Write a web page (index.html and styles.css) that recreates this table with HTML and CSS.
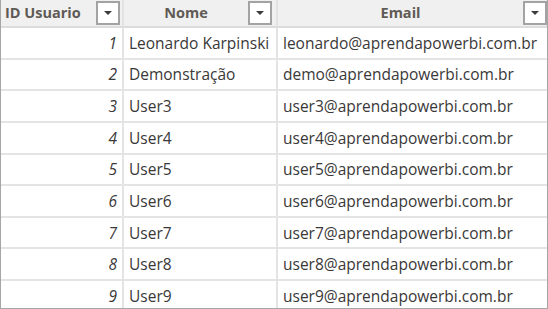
FILE: index.html
```html
<!DOCTYPE html>
<html>
<head>
<meta charset="utf-8">
<link rel="stylesheet" href="styles.css">
</head>
<body>
<div class="frame">
  <div class="grid">
    <div class="hcell c1"><span class="label left">ID Usuario</span><span class="fbtn b1"><svg width="10" height="6" viewBox="0 0 10 6"><path d="M1 1h8L5 5z" fill="#3c3c3c"/></svg></span></div>
    <div class="hcell c2"><span class="label">Nome</span><span class="fbtn b2"><svg width="10" height="6" viewBox="0 0 10 6"><path d="M1 1h8L5 5z" fill="#3c3c3c"/></svg></span></div>
    <div class="hcell c3"><span class="label">Email</span><span class="fbtn b3"><svg width="10" height="6" viewBox="0 0 10 6"><path d="M1 1h8L5 5z" fill="#3c3c3c"/></svg></span></div>

    <div class="cell num c1">1</div><div class="cell c2">Leonardo Karpinski</div><div class="cell c3">leonardo@aprendapowerbi.com.br</div>
    <div class="cell num c1">2</div><div class="cell c2">Demonstração</div><div class="cell c3">demo@aprendapowerbi.com.br</div>
    <div class="cell num c1">3</div><div class="cell c2">User3</div><div class="cell c3">user3@aprendapowerbi.com.br</div>
    <div class="cell num c1">4</div><div class="cell c2">User4</div><div class="cell c3">user4@aprendapowerbi.com.br</div>
    <div class="cell num c1">5</div><div class="cell c2">User5</div><div class="cell c3">user5@aprendapowerbi.com.br</div>
    <div class="cell num c1">6</div><div class="cell c2">User6</div><div class="cell c3">user6@aprendapowerbi.com.br</div>
    <div class="cell num c1">7</div><div class="cell c2">User7</div><div class="cell c3">user7@aprendapowerbi.com.br</div>
    <div class="cell num c1">8</div><div class="cell c2">User8</div><div class="cell c3">user8@aprendapowerbi.com.br</div>
    <div class="cell num c1">9</div><div class="cell c2">User9</div><div class="cell c3">user9@aprendapowerbi.com.br</div>
  </div>
</div>
</body>
</html>
```

FILE: styles.css
```css
html, body {
  margin: 0;
  padding: 0;
  background: #ffffff;
}
.frame {
  width: 548px;
  height: 309px;
  box-sizing: border-box;
  border: 1px solid #a6a6a6;
  border-top: none;
  overflow: hidden;
  background: #ffffff;
  font-family: "Open Sans", "Noto Sans", "DejaVu Sans", sans-serif;
}
.grid {
  display: grid;
  grid-template-columns: 123px 154px 269px;
  grid-template-rows: 28px repeat(9, 31.625px);
}
.hcell {
  display: flex;
  align-items: flex-start;
  background: #f0f0f0;
  border-bottom: 2px solid #dcdcdc;
  border-right: 2px solid #e2e2e2;
  box-sizing: border-box;
  font-weight: 700;
  font-size: 14.5px;
  color: #5f5a55;
}
.hcell .label {
  flex: 1;
  text-align: center;
  line-height: 25px;
  white-space: nowrap;
  overflow: hidden;
}
.hcell .label.left {
  text-align: left;
  padding-left: 4px;
}
.hcell.c3 {
  border-right: none;
}
.fbtn {
  width: 24px;
  height: 24px;
  box-sizing: border-box;
  margin-top: 1px;
  border: 2px solid #a3a3a3;
  background: #ffffff;
  display: flex;
  align-items: center;
  justify-content: center;
}
.b1 { margin-right: 2px; }
.b2 { margin-right: 4px; }
.b3 { margin-right: 0; }
.cell {
  display: flex;
  align-items: center;
  border-bottom: 2px solid #e4e4e4;
  border-right: 2px solid #e4e4e4;
  box-sizing: border-box;
  font-size: 15.5px;
  color: #3a3838;
  padding-left: 5px;
  white-space: nowrap;
  overflow: hidden;
}
.cell.c3 {
  border-right: none;
}
.cell.num {
  justify-content: flex-end;
  padding-left: 0;
  padding-right: 5px;
  font-style: italic;
}
```
